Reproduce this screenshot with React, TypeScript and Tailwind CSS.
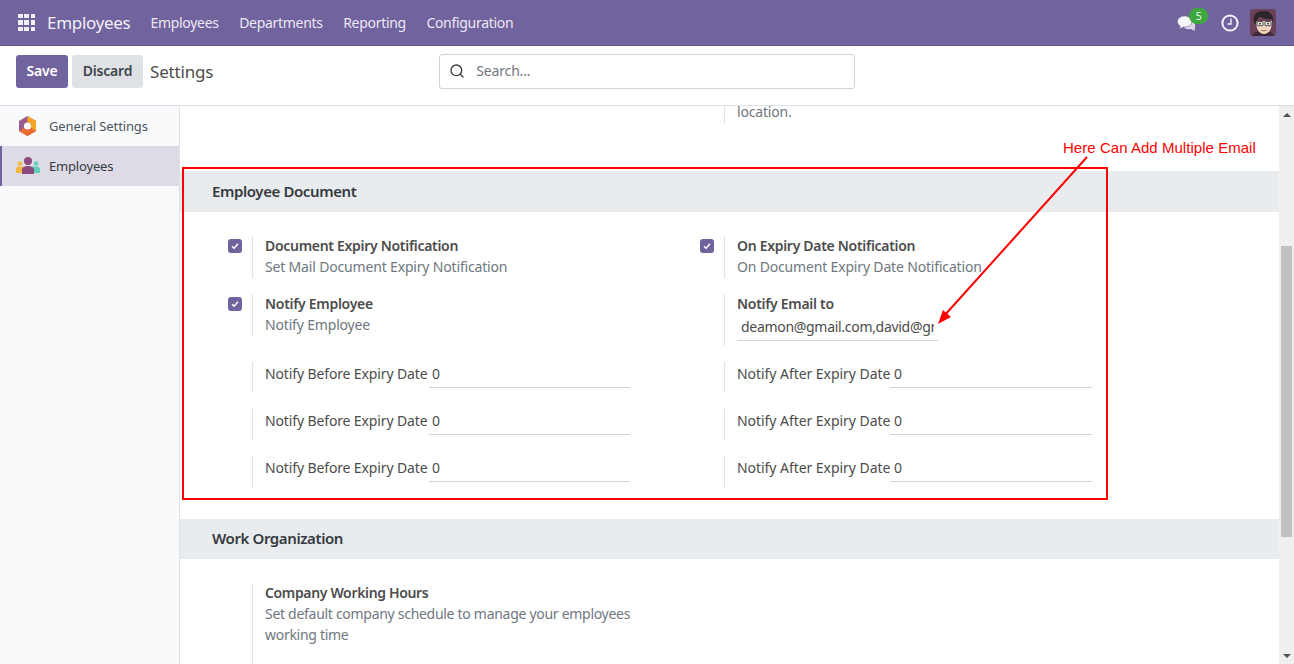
import { Search } from "lucide-react";

const Check = () => (
  <div className="w-[14px] h-[14px] rounded-[3px] bg-[#71639e] flex items-center justify-center">
    <svg width="8" height="8" viewBox="0 0 8 8">
      <path d="M1 4.2 L3.1 6.2 L7 1.8" fill="none" stroke="#fff" strokeWidth="1.5" />
    </svg>
  </div>
);

const CheckRow = ({ title, sub }: { title: string; sub: string }) => (
  <div className="w-[472px] flex h-[42px]">
    <div className="w-[72px] pl-[48px] pt-[3px]">
      <Check />
    </div>
    <div className="border-l border-[#dee2e6] pl-3">
      <div className="font-semibold tracking-[-0.3px] text-[#4c4c4c] h-[20px] leading-[20px]">{title}</div>
      <div className="text-[#6f7780] h-[21px] leading-[21px]">{sub}</div>
    </div>
  </div>
);

const DateRow = ({ label, labelClass, inputClass }: { label: string; labelClass: string; inputClass: string }) => (
  <div className="w-[472px] flex h-[31px]">
    <div className="w-[72px]" />
    <div className="border-l border-[#dee2e6] pl-3 flex items-start">
      <span className={`${labelClass} text-[#4c4c4c] leading-[23px] whitespace-nowrap`}>{label}</span>
      <div className={`${inputClass} h-[26px] border-b border-[#ced4da] text-[#4c4c4c] leading-[23px]`}>0</div>
    </div>
  </div>
);

const MENU = ["Employees", "Departments", "Reporting", "Configuration"];

export default function App() {
  return (
    <div className="relative w-[1294px] h-[664px] overflow-hidden bg-white text-[14px] font-['Noto_Sans',sans-serif] tracking-[-0.17px]">
      <nav className="h-[46px] bg-[#71639e] border-b border-[#5f5486] flex items-center text-white">
        <div className="ml-[18px] grid grid-cols-3 gap-[2px] w-[17px]">
          {Array.from({ length: 9 }).map((_, i) => (
            <div key={i} className="w-[4.5px] h-[4.5px] bg-[#f1eff6]" />
          ))}
        </div>
        <span className="ml-[12px] text-[17px] tracking-[-0.3px] text-[#f1eff6]">Employees</span>
        <div className="ml-[20px] flex gap-[20.5px] tracking-[-0.3px] text-[#ebe8f2]">
          {MENU.map((m) => (
            <span key={m}>{m}</span>
          ))}
        </div>
        <div className="ml-auto flex items-center">
          <div className="relative mr-[25px] w-[19px] h-[18px]">
            <svg width="19" height="18" viewBox="0 0 19 18">
              <path d="M7 12 C7 8 11 6 14 7 C17 8 19 10 18 13 L17.5 17 L14 15 C10 15.5 7 15 7 12 Z" fill="#dcd8e8" />
              <path d="M7.5 2 C3.5 2 0.5 4.5 0.5 7.5 C0.5 9.5 1.6 11 3.2 12 L2.6 15 L6.4 13 C11 13.5 15 11 15 7.5 C15 4.5 11.5 2 7.5 2 Z" fill="#f6f5fa" stroke="#71639e" strokeWidth="0.6" />
            </svg>
            <span className="absolute -top-[6px] left-[12px] w-[19px] h-[16px] rounded-full bg-[#3ea83f] text-[11px] leading-[16px] text-center text-[#e8f5e0]">5</span>
          </div>
          <svg width="18" height="18" viewBox="0 0 18 18" className="mr-[11px]">
            <circle cx="9" cy="9" r="7.6" fill="none" stroke="#f4f3f8" strokeWidth="2" />
            <path d="M10 4.5 V10 H6.5" fill="none" stroke="#f4f3f8" strokeWidth="1.4" />
          </svg>
          <svg width="26" height="27" viewBox="0 0 26 27" className="mr-[18px] rounded-[3px]">
            <rect width="26" height="27" fill="#6a4058" />
            <path d="M2 27 C3 23 8 22 13 22 C18 22 23 23 24 27 Z" fill="#3f2a38" />
            <path d="M6 12 C6 20 9 25 14 25 C19 25 22 20 22 12 Z" fill="#f3d6c1" />
            <path d="M4 13 C2 6 7 2 14 2 C21 2 24 7 23 14 L21.5 10 C17 10.5 12 9 9 7.5 C9 9.5 7 10 6.5 13 L5.5 15 Z" fill="#2b2428" />
            <rect x="7" y="12.5" width="6" height="4.2" rx="0.6" fill="#e7e2dc" stroke="#4d4d4d" strokeWidth="1" />
            <rect x="15" y="12.5" width="6" height="4.2" rx="0.6" fill="#e7e2dc" stroke="#4d4d4d" strokeWidth="1" />
            <circle cx="10" cy="14.6" r="0.9" fill="#333" />
            <circle cx="18" cy="14.6" r="0.9" fill="#333" />
            <path d="M11 21 C12.5 22 15 22 16.5 21" fill="none" stroke="#a5654f" strokeWidth="1" />
          </svg>
        </div>
      </nav>

      <div className="h-[60px] border-b border-[#dee2e6] flex items-start bg-white">
        <button className="mt-[9px] ml-[16px] w-[52px] h-[33px] pb-[2px] rounded-[3px] bg-[#71639e] text-white font-semibold">Save</button>
        <button className="mt-[9px] ml-[4px] w-[71px] h-[33px] pb-[2px] rounded-[3px] bg-[#dee2e6] text-[#3f4549] font-semibold">Discard</button>
        <span className="mt-[13px] ml-[7px] text-[17px] leading-[26px] text-[#4c4c4c]">Settings</span>
        <div className="mt-[8px] ml-[226px] w-[416px] h-[35px] pb-[2px] border border-[#ced4da] rounded-[3px] flex items-center">
          <Search className="ml-[9px] w-[16px] h-[16px] text-[#343a40]" strokeWidth={2} />
          <span className="ml-[11px] text-[#6f7780]">Search...</span>
        </div>
      </div>

      <div className="flex h-[558px]">
        <aside className="w-[180px] shrink-0 bg-[#f9fafb] border-r border-[#dee2e6]">
          <div className="h-[40px] flex items-center pl-[18px] text-[13px] text-[#4c5660]">
            <svg width="19" height="20" viewBox="0 0 19 20">
              <path d="M9.5 0 L18 5 V15 L9.5 20 L1 15 V5 Z" fill="#9a5a8c" />
              <path d="M9.5 0 L18 5 V15 L13 12 V8 L9.5 6 Z" fill="#f6a623" />
              <path d="M1 15 L6 12 L9.5 14 L13 12 L18 15 L9.5 20 Z" fill="#ef6c2e" />
              <circle cx="9.5" cy="10" r="3.6" fill="#fff" />
            </svg>
            <span className="ml-[12px] pt-[2px] tracking-[-0.12px]">General Settings</span>
          </div>
          <div className="h-[40px] flex items-center pl-[14px] bg-[#dedbe7] border-l-2 border-[#71639e] text-[13px] text-[#343a40]">
            <svg width="24" height="18" viewBox="0 0 24 18">
              <circle cx="4" cy="6.5" r="2.2" fill="#f5b83d" />
              <circle cx="20" cy="6.5" r="2.2" fill="#5fd0b8" />
              <path d="M0 16 V12 C0 10 2 9.5 4 9.5 H8 V16 Z" fill="#f5b83d" />
              <path d="M16 9.5 H20 C22 9.5 24 10 24 12 V16 H16 Z" fill="#5fd0b8" />
              <circle cx="12" cy="4" r="4" fill="#8d4a7e" />
              <path d="M6 17 V13 C6 10 9 9 12 9 C15 9 18 10 18 13 V17 Z" fill="#8d4a7e" />
            </svg>
            <span className="ml-[9px] pt-[2px]">Employees</span>
          </div>
        </aside>

        <main className="flex-1 overflow-hidden">
          <div className="h-[65px] flex">
            <div className="w-[472px]" />
            <div className="w-[72px]" />
            <div className="h-[18px] border-l border-[#dee2e6] pl-3 text-[#6f7780] leading-[12px]">location.</div>
          </div>

          <div className="h-[41px] bg-[#e9ecef] pl-[32px] flex items-center font-semibold text-[#343a40] text-[15px] tracking-[-0.4px]">Employee Document</div>

          <div className="pt-[24px] pb-[32px]">
            <div className="flex mb-4">
              <CheckRow title="Document Expiry Notification" sub="Set Mail Document Expiry Notification" />
              <CheckRow title="On Expiry Date Notification" sub="On Document Expiry Date Notification" />
            </div>
            <div className="flex mb-4 h-[52px]">
              <CheckRow title="Notify Employee" sub="Notify Employee" />
              <div className="w-[472px] flex h-[52px]">
                <div className="w-[72px]" />
                <div className="border-l border-[#dee2e6] pl-3">
                  <div className="font-semibold tracking-[-0.3px] text-[#4c4c4c] h-[20px] leading-[20px]">Notify Email to</div>
                  <div className="w-[201px] h-[27px] border-b border-[#ced4da] px-[4px] text-[#4c4c4c] leading-[26px] tracking-[-0.3px]">
                    <div className="overflow-hidden whitespace-nowrap">deamon@gmail.com,david@gmail.com</div>
                  </div>
                </div>
              </div>
            </div>
            <div className="flex flex-col gap-4">
              {[0, 1, 2].map((i) => (
                <div key={i} className="flex">
                  <DateRow label="Notify Before Expiry Date" labelClass="w-[164px] tracking-[-0.13px]" inputClass="w-[201px] pl-[3px]" />
                  <DateRow label="Notify After Expiry Date" labelClass="w-[153px] tracking-[-0.05px]" inputClass="w-[202px] pl-[4px]" />
                </div>
              ))}
            </div>
          </div>

          <div className="h-[40px] pb-[2px] bg-[#e9ecef] pl-[32px] flex items-center font-semibold text-[#343a40] text-[15px] tracking-[-0.4px]">Work Organization</div>

          <div className="pt-[24px] flex">
            <div className="w-[72px]" />
            <div className="border-l border-[#dee2e6] pl-3 h-[90px] w-[400px]">
              <div className="font-semibold tracking-[-0.35px] text-[#4c4c4c] h-[20px] leading-[20px]">Company Working Hours</div>
              <div className="text-[#6f7780] leading-[21px] tracking-[-0.29px]">Set default company schedule to manage your employees working time</div>
            </div>
          </div>
        </main>

        <div className="w-[15px] shrink-0 bg-[#efefef] flex flex-col items-center relative">
          <div className="mt-[7px] w-0 h-0 border-x-[4px] border-x-transparent border-b-[4px] border-b-[#505050]" />
          <div className="absolute top-[140px] left-[2px] w-[11px] h-[291px] bg-[#c1c1c1]" />
          <div className="mt-auto mb-[6px] w-0 h-0 border-x-[4px] border-x-transparent border-t-[4px] border-t-[#505050]" />
        </div>
      </div>

      <div className="absolute left-[182px] top-[167px] w-[926px] h-[333px] border-2 border-[#ff0000] pointer-events-none" />
      <span className="absolute left-[1063px] top-[139px] text-[15px] leading-[18px] tracking-[0.04px] text-[#ff0000] font-['Liberation_Sans',sans-serif]">Here Can Add Multiple Email</span>
      <svg className="absolute left-0 top-0 pointer-events-none" width="1294" height="664">
        <line x1="1087" y1="157" x2="944" y2="316" stroke="#ff0000" strokeWidth="2" />
        <polygon points="938,324 943,310 951,317" fill="#ff0000" />
      </svg>
    </div>
  );
}
